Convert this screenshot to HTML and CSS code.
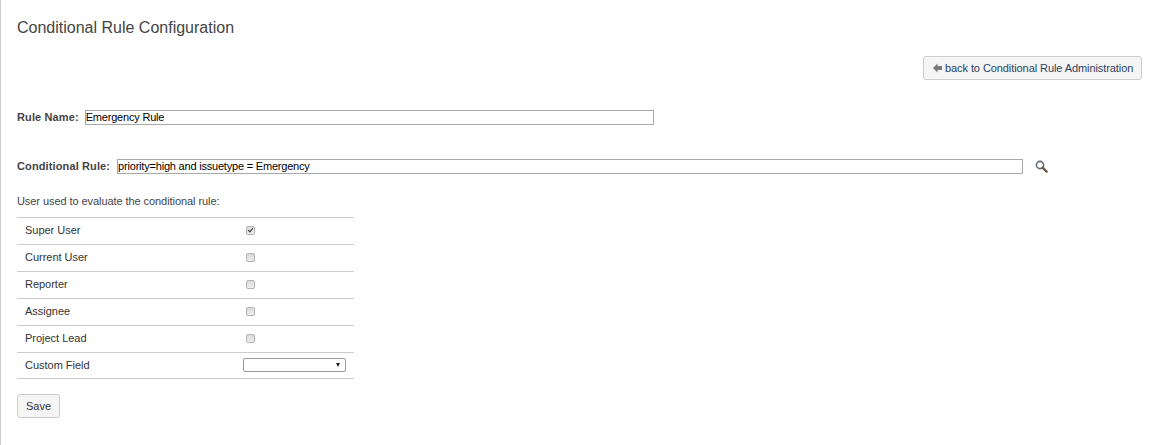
FILE: index.html
```html
<!DOCTYPE html>
<html lang="en">
<head>
    <meta charset="UTF-8">
    <title>Conditional Rule Configuration</title>
    <link rel="stylesheet" href="styles.css">
</head>
<body>
    <div class="page">
        <h1 class="title">Conditional Rule Configuration</h1>

        <div class="toolbar">
            <a class="btn btn-back" href="#">
                <svg class="back-icon" width="10" height="10" viewBox="0 0 10 10"><path d="M0 5 L4.5 0.5 V3 H9 V7 H4.5 V9.5 Z" fill="#777"/></svg>
                back to Conditional Rule Administration
            </a>
        </div>

        <form class="rule-form">
            <div class="field field-name">
                <label class="field-label" for="ruleName">Rule Name:</label>
                <input class="text-input name-input" type="text" id="ruleName" value="Emergency Rule">
            </div>

            <div class="field field-rule">
                <label class="field-label" for="ruleQuery">Conditional Rule:</label>
                <input class="text-input query-input" type="text" id="ruleQuery" value="priority=high and issuetype = Emergency">
                <svg class="search-icon" width="13" height="13" viewBox="0 0 13 13">
                    <circle cx="5" cy="5" r="3.6" fill="none" stroke="#5f6b75" stroke-width="1.6"/>
                    <path d="M7.8 7.8 L11.6 11.6" stroke="#6b5a48" stroke-width="2.4" stroke-linecap="round"/>
                </svg>
            </div>

            <p class="user-intro">User used to evaluate the conditional rule:</p>

            <table class="user-table">
                <tr>
                    <td class="user-name">Super User</td>
                    <td><input class="check" type="checkbox" checked></td>
                </tr>
                <tr>
                    <td class="user-name">Current User</td>
                    <td><input class="check" type="checkbox"></td>
                </tr>
                <tr>
                    <td class="user-name">Reporter</td>
                    <td><input class="check" type="checkbox"></td>
                </tr>
                <tr>
                    <td class="user-name">Assignee</td>
                    <td><input class="check" type="checkbox"></td>
                </tr>
                <tr>
                    <td class="user-name">Project Lead</td>
                    <td><input class="check" type="checkbox"></td>
                </tr>
                <tr class="last-row">
                    <td class="user-name">Custom Field</td>
                    <td><span class="select-wrap"><select class="select"><option></option></select></span></td>
                </tr>
            </table>

            <button class="btn btn-save" type="submit">Save</button>
        </form>
    </div>
</body>
</html>
```

FILE: styles.css
```css
html, body {
    margin: 0;
    padding: 0;
    height: 100%;
}

body {
    font-family: "Liberation Sans", Arial, sans-serif;
    font-size: 11px;
    color: #333;
    background-color: #fff;
    overflow: hidden;
}

.page {
    box-sizing: border-box;
    height: 445px;
    border-left: 1px solid #ccc;
    padding: 18px 13px 0 16px;
}

.title {
    margin: 0;
    font-size: 16px;
    font-weight: normal;
    line-height: 20px;
    color: #444;
}

.toolbar {
    display: flex;
    justify-content: flex-end;
    margin-top: 18px;
}

.btn {
    box-sizing: border-box;
    display: inline-flex;
    align-items: center;
    height: 24px;
    border: 1px solid #ccc;
    border-radius: 3px;
    background-color: #f5f5f5;
    font-family: inherit;
    font-size: 11px;
    color: #333;
    text-decoration: none;
}

.btn-back {
    width: 219px;
    padding: 0 0 1px 9px;
    letter-spacing: -0.08px;
    color: #2a3f5f;
}

.back-icon {
    margin-right: 2px;
}

.field {
    display: flex;
    align-items: center;
    height: 15px;
}

.field-name {
    margin-top: 30px;
}

.field-rule {
    margin-top: 34px;
}

.field-label {
    padding-bottom: 1px;
    font-weight: bold;
    letter-spacing: 0.12px;
    color: #444;
}

.text-input {
    box-sizing: border-box;
    height: 15px;
    padding: 0 0 1px;
    border: 1px solid #a9a9a9;
    border-radius: 0;
    outline: none;
    font-family: inherit;
    font-size: 11px;
    letter-spacing: -0.2px;
    color: #000;
}

.name-input {
    width: 569px;
    margin-left: 6px;
}

.query-input {
    width: 906px;
    margin-left: 7px;
}

.search-icon {
    margin-left: 12px;
}

.user-intro {
    margin: 21px 0 9px;
    line-height: 13px;
    letter-spacing: -0.07px;
    color: #444;
}

.user-table {
    width: 337px;
    border-collapse: collapse;
    border-bottom: 1px solid #ccc;
}

.user-table td {
    box-sizing: border-box;
    height: 27px;
    padding: 0 0 1px;
    border-top: 1px solid #ccc;
    vertical-align: middle;
}

.last-row td {
    height: 26px;
}

.user-table .user-name {
    width: 226px;
    padding: 0 0 2px 8px;
    letter-spacing: -0.02px;
}

.user-table .last-row .user-name {
    padding-bottom: 1px;
}

.check {
    appearance: none;
    position: relative;
    display: block;
    box-sizing: border-box;
    width: 9px;
    height: 9px;
    margin: 0 0 0 3px;
    border: 1px solid #b4b4b4;
    border-radius: 2px;
    background: linear-gradient(#dcdcdc, #ececec);
}

.check:checked::before {
    content: "";
    position: absolute;
    left: 2px;
    top: 0;
    width: 2px;
    height: 4px;
    border: solid #333;
    border-width: 0 1.5px 1.5px 0;
    transform: rotate(40deg);
}

.select-wrap {
    position: relative;
    display: block;
    width: 103px;
    height: 14px;
}

.select-wrap::after {
    content: "";
    position: absolute;
    right: 6px;
    top: 5px;
    border: 2.5px solid transparent;
    border-top: 4px solid #222;
    border-bottom: 0;
}

.select {
    appearance: none;
    display: block;
    box-sizing: border-box;
    width: 103px;
    height: 14px;
    padding: 0;
    border: 1px solid #999;
    border-radius: 2px;
    background-color: #fff;
}

.btn-save {
    justify-content: center;
    width: 43px;
    margin-top: 15px;
}
```
